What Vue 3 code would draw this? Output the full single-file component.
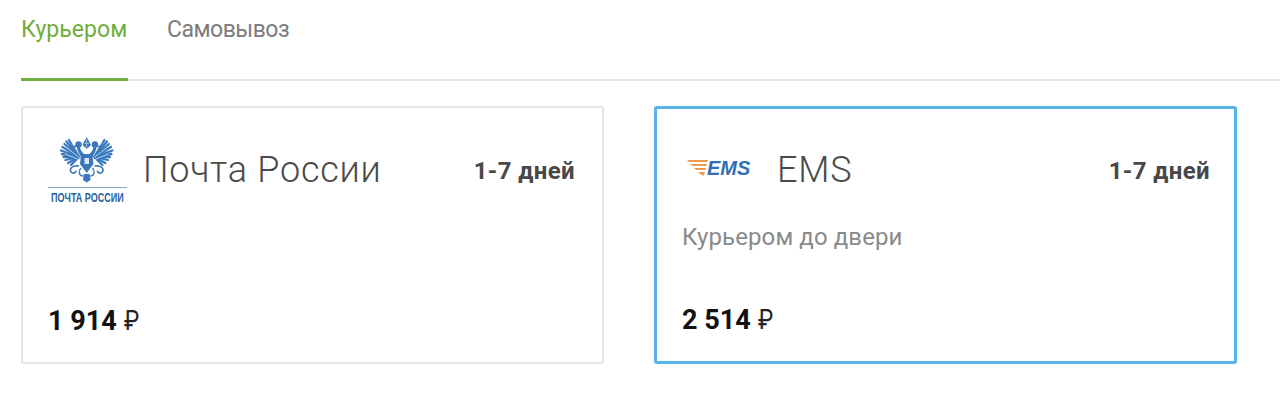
<script setup>
const tabs = [
  { label: 'Курьером', active: true },
  { label: 'Самовывоз', active: false }
]
const feathers = [
  [9, 3], [6.500, 4.500], [4.500, 7], [2.500, 10], [1, 13.500], [2, 17], [3.500, 20], [5.500, 23], [8, 26], [11, 28]
]
</script>

<template>
  <div class="page">
    <nav class="tabs">
      <div v-for="t in tabs" :key="t.label" class="tab" :class="{ active: t.active }">{{ t.label }}</div>
    </nav>
    <div class="cards">
      <section class="card">
        <div class="head">
          <div class="logo post">
            <svg width="54" height="46" viewBox="0 0 54 46">
              <defs>
                <g id="half">
                  <line v-for="(f, i) in feathers" :key="i" x1="19" y1="20" :x2="f[0]" :y2="f[1]" stroke="#3a78bd" stroke-width="2.300" stroke-linecap="round" />
                  <path d="M12 6 L21 18 M7 11 L20 21 M5 17 L20 23" stroke="#d6e4f3" stroke-width=".8" fill="none" />
                  <circle cx="18.500" cy="7.500" r="3.200" fill="#3a78bd" />
                  <path d="M16 8 L12.500 9.500 L16 10.500 Z" fill="#3a78bd" />
                  <path d="M20 9 C20 13 22 15 24 17 L22 21 C19 17 17 13 17 10 Z" fill="#3a78bd" />
                  <path d="M19 29 C12 28 9 32 11 35 C13 37 16 36 16 33.500" fill="none" stroke="#3a78bd" stroke-width="1.600" />
                  <path d="M21 31 C18 34 19 39 23 39" fill="none" stroke="#3a78bd" stroke-width="1.400" />
                </g>
              </defs>
              <use href="#half" />
              <use href="#half" transform="matrix(-1 0 0 1 53.400 0)" />
              <path d="M21 17 H32.400 L33.400 27 L26.700 36 L20 27 Z" fill="#3a78bd" />
              <path d="M24.500 21 H29 V27 H24.500 Z" fill="#dbe8f5" />
              <path d="M23.700 37 H29.700 L30.500 43 L26.700 45.500 L23 43 Z" fill="#3a78bd" />
              <path d="M24 5 L26.700 0 L29.400 5 L31 8 L26.700 12 L22.500 8 Z" fill="#3a78bd" />
              <path d="M26.700 2 V11 M24.500 6.500 H29" stroke="#d6e4f3" stroke-width=".6" />
            </svg>
            <div class="rule"></div>
            <div class="post-name">ПОЧТА РОССИИ</div>
          </div>
          <h2 class="name">Почта России</h2>
          <div class="days">1-7 дней</div>
        </div>
        <div class="price">1 914 <span class="rub">₽</span></div>
      </section>

      <section class="card selected">
        <div class="head">
          <div class="logo ems">
            <svg width="22" height="18" viewBox="0 0 22 18">
              <g fill="#ee9a4d">
                <path d="M0 1 H21 L20.400 3 H2 Z"/>
                <path d="M3 5 H20 L19.400 7 H5.500 Z"/>
                <path d="M7 9 H19 L18.400 11 H9.500 Z"/>
                <path d="M11 13 H18 L17.400 15 L16 17 Z"/>
              </g>
            </svg>
            <span class="ems-word">EMS</span>
          </div>
          <h2 class="name">EMS</h2>
          <div class="days">1-7 дней</div>
        </div>
        <p class="note">Курьером до двери</p>
        <div class="price">2 514 <span class="rub">₽</span></div>
      </section>
    </div>
  </div>
</template>

<style>
html, body { margin: 0; background: #fff; }
</style>

<style scoped>
.page {
  width: 1280px;
  height: 413px;
  font-family: Roboto, "Liberation Sans", sans-serif;
  overflow: hidden;
  background: #fff;
}
.tabs {
  display: flex;
  gap: 39px;
  height: 79px;
  margin-left: 21px;
  border-bottom: 2px solid #e6e6e6;
}
.tab {
  height: 79px;
  box-sizing: border-box;
  padding-top: 15px;
  font-size: 23px;
  line-height: 30px;
  color: #7c7c7c;
  letter-spacing: -.5px;
}
.tab.active {
  width: 107px;
  color: #6fae3a;
  border-bottom: 3px solid #6fae3a;
  height: 81px;
  letter-spacing: .05px;
}
.cards {
  display: flex;
  gap: 50px;
  margin: 25px 0 0 21px;
}
.card {
  position: relative;
  box-sizing: border-box;
  width: 583px;
  height: 258px;
  padding: 0 27px;
  border: 2px solid #e4e4e4;
  border-radius: 3px;
}
.card.selected {
  border: 3px solid #56b4e6;
  padding: 0 24px 0 25px;
}
.head {
  display: flex;
  align-items: flex-start;
}
.logo { flex: none; }
.post {
  width: 80px;
  margin: 29px 16px 0 -3px;
  display: flex;
  flex-direction: column;
  align-items: center;
}
.post svg { display: block; margin-bottom: 4px; }
.rule { width: 79px; height: 1px; background: #7ba6d6; }
.post-name {
  font-family: "Liberation Sans", sans-serif;
  font-size: 12px;
  line-height: 13px;
  font-weight: 700;
  color: #2b5e9e;
  margin-top: 4px;
  white-space: nowrap;
  transform: scaleX(.75);
}
.ems {
  width: 90px;
  margin: 48px 0 0 5px;
  display: flex;
  align-items: center;
}
.ems svg { flex: none; margin-right: -2px; }
.ems-word {
  font-family: "Liberation Sans", sans-serif;
  font-weight: 700;
  font-style: italic;
  font-size: 20px;
  line-height: 22px;
  color: #2f6fb5;
}
.name {
  margin: 40px 0 0;
  font-size: 36px;
  line-height: 44px;
  font-weight: 300;
  color: #4a4a4a;
  letter-spacing: .75px;
}
.selected .name { margin-top: 39px; }
.days {
  margin: 49px 0 0 auto;
  font-size: 24px;
  line-height: 28px;
  font-weight: 700;
  color: #484848;
  letter-spacing: .4px;
}
.selected .days { margin-top: 48px; }
.note {
  margin: 0;
  position: absolute;
  top: 113px;
  left: 25px;
  font-size: 24px;
  line-height: 30px;
  color: #8a8a8a;
  letter-spacing: .1px;
}
.price {
  position: absolute;
  left: 25px;
  bottom: 24px;
  font-size: 27px;
  line-height: 34px;
  font-weight: 700;
  color: #111;
}
.rub {
  display: inline-block;
  font-weight: 400;
  color: #222;
  transform: scaleX(.85);
  transform-origin: left;
  margin-left: 1px;
}
</style>
